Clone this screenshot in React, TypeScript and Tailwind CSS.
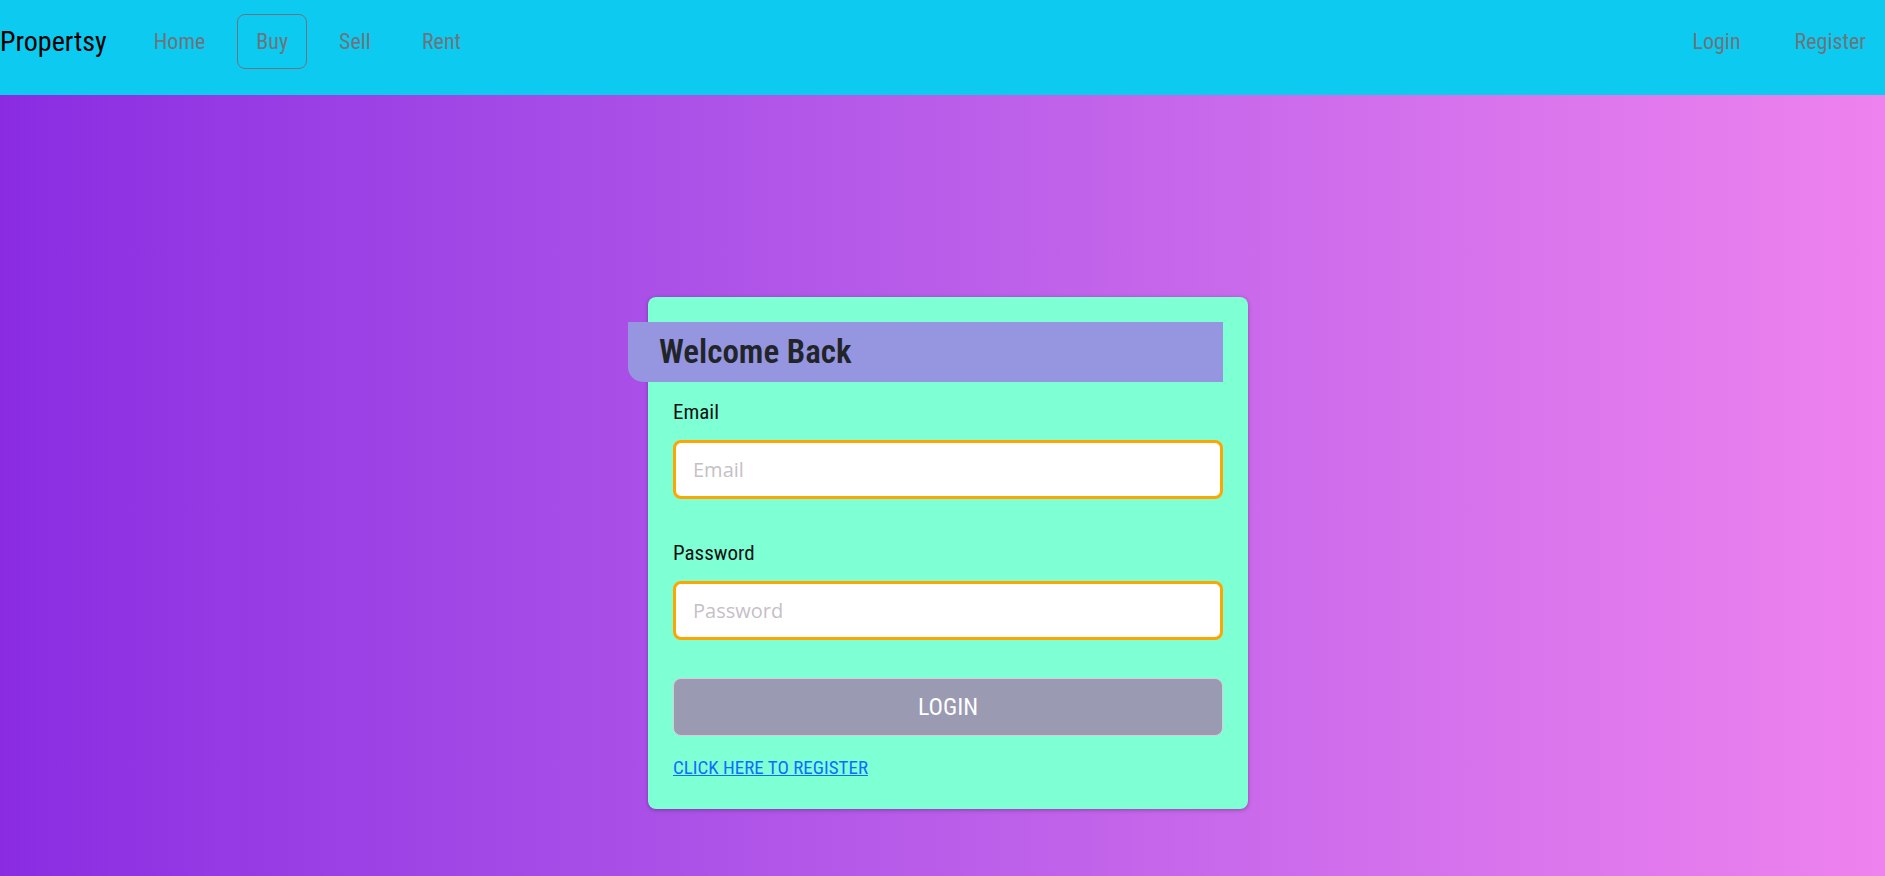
import React from 'react';

const condensed = "font-[family-name:'Roboto_Condensed','Liberation_Sans',sans-serif]";

const NavLink = ({ label, active }: { label: string; active?: boolean }) => (
  <a
    href="#"
    className={`flex items-center h-[55px] px-[18px] rounded-lg border text-[22px] text-[#6c757d] ${
      active ? 'border-[#6c757d]' : 'border-transparent'
    }`}
  >
    {label}
  </a>
);

const Field = ({ label, type, first }: { label: string; type: string; first?: boolean }) => (
  <div className={first ? 'mt-[15px]' : 'mt-[39px]'}>
    <label className="block text-[21px] leading-[30px] text-[#111]">{label}</label>
    <input
      type={type}
      placeholder={label}
      className="mt-[13px] w-full h-[59px] px-[17px] bg-white border-[3px] border-[#ffa500] rounded-lg text-[20px] font-[family-name:'Open_Sans',sans-serif] placeholder:text-[#c5c0c6] outline-none"
    />
  </div>
);

export default function App() {
  return (
    <div className={`min-h-screen flex flex-col ${condensed}`}>
      <nav className="h-[95px] bg-[#0dcaf0] flex items-center pb-[12px]">
        <a href="#" className="text-[28px] text-black">Propertsy</a>
        <div className="flex items-center gap-[13px] ml-[28px]">
          <NavLink label="Home" />
          <NavLink label="Buy" active />
          <NavLink label="Sell" />
          <NavLink label="Rent" />
        </div>
        <div className="flex items-center gap-[16px] ml-auto">
          <NavLink label="Login" />
          <NavLink label="Register" />
        </div>
      </nav>

      <main className="flex-1 bg-linear-to-r from-[#8a2be2] to-[#ee82ee] flex justify-center pl-[11px] pt-[202px] pb-[66px]">
        <div className="w-[600px] h-fit bg-[#7fffd4] rounded-lg shadow-[0_1px_4px_rgba(0,0,0,0.3)] pt-[25px] px-[25px] pb-[26px]">
          <div className="-ml-[45px] h-[60px] bg-[#9595e0] rounded-bl-[15px] flex items-center pl-[31px]">
            <h1 className="text-[33px] font-semibold text-[#212529]">Welcome Back</h1>
          </div>

          <Field label="Email" type="email" first />
          <Field label="Password" type="password" />

          <button className="mt-[38px] w-full h-[58px] bg-[#9a9ab2] border border-[#dccbd6] rounded-lg text-white text-[24px] uppercase">
            Login
          </button>

          <a href="#" className="block mt-[17px] w-fit text-[19px] leading-[30px] text-[#0d6efd] underline uppercase">
            Click here to register
          </a>
        </div>
      </main>
    </div>
  );
}
